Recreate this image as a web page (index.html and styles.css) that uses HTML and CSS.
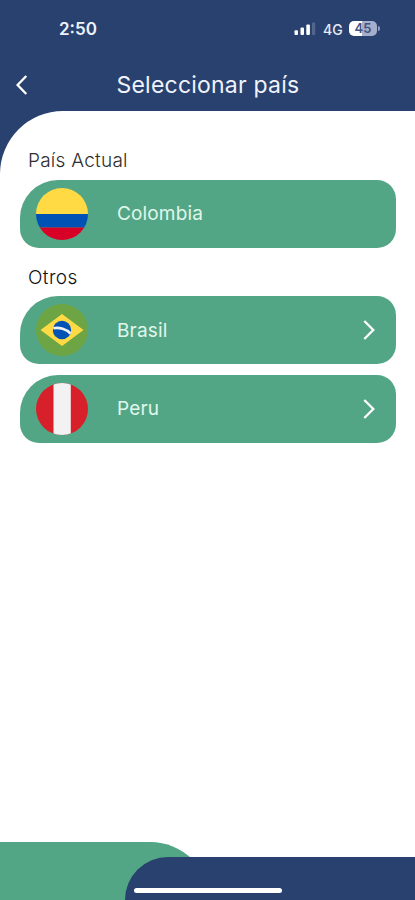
FILE: index.html
```html
<!DOCTYPE html>
<html lang="es">
<head>
<meta charset="utf-8">
<meta name="viewport" content="width=device-width, initial-scale=1">
<title>Seleccionar país</title>
<link rel="stylesheet" href="styles.css">
</head>
<body>
<div class="app">
  <div class="status">
    <span class="time">2:50</span>
    <svg class="signal" width="22" height="14" viewBox="0 0 22 14" fill="#fff">
      <rect x="0.5" y="8.300" width="3.500" height="4.600" rx="1"/>
      <rect x="6.500" y="5.600" width="3.500" height="7.300" rx="1"/>
      <rect x="12.300" y="2.600" width="3.600" height="10.300" rx="1"/>
      <rect x="18" y="0.600" width="3.200" height="12.300" rx="1" opacity=".2"/>
    </svg>
    <span class="network">4G</span>
    <span class="battery"><span class="level">45</span></span>
  </div>
  <header class="header">
    <svg class="back" width="14" height="20" viewBox="0 0 14 20" fill="none" stroke="#fff" stroke-width="2.300"><path d="M12.300 1L3.600 10l8.700 9"/></svg>
    <h1 class="title">Seleccionar país</h1>
  </header>
  <main class="sheet">
    <h2 class="label">País Actual</h2>
    <div class="card">
      <svg class="flag" viewBox="0 0 52 52">
        <clipPath id="disc"><circle cx="26" cy="26" r="26"/></clipPath>
        <g clip-path="url(#disc)">
          <path fill="#ffda44" d="M0 0h52v26H0z"/>
          <path fill="#0052b4" d="M0 26h52v13.500H0z"/>
          <path fill="#d80027" d="M0 39.500h52V52H0z"/>
        </g>
      </svg>
      <span class="name">Colombia</span>
    </div>
    <h2 class="label others">Otros</h2>
    <div class="card">
      <svg class="flag" viewBox="0 0 52 52">
        <circle cx="26" cy="26" r="26" fill="#6da544"/>
        <path fill="#ffda44" d="M26 10l21.500 16L26 42 4.500 26z"/>
        <circle cx="26" cy="26" r="9.200" fill="#0052b4"/>
        <path fill="none" stroke="#f0f0f0" stroke-width="2.700" d="M17.300 24.200c6-1.200 13.200.8 17.300 5.400"/>
      </svg>
      <span class="name">Brasil</span>
      <svg class="go" width="14" height="20" viewBox="0 0 14 20" fill="none" stroke="#fff" stroke-width="2.300"><path d="M2.300 1l9 9-9 9"/></svg>
    </div>
    <div class="card">
      <svg class="flag" viewBox="0 0 52 52">
        <g clip-path="url(#disc)">
          <path fill="#d8202a" d="M0 0h52v52H0z"/>
          <path fill="#f3f2f3" d="M17.500 0h17.300v52H17.500z"/>
        </g>
      </svg>
      <span class="name">Peru</span>
      <svg class="go" width="14" height="20" viewBox="0 0 14 20" fill="none" stroke="#fff" stroke-width="2.300"><path d="M2.300 1l9 9-9 9"/></svg>
    </div>
  </main>
  <footer class="footer">
    <div class="wave-green"></div>
    <div class="wave-navy"><div class="home"></div></div>
  </footer>
</div>
</body>
</html>
```
FILE: styles.css
```css
* { box-sizing: border-box; }
body {
  margin: 0;
  font-family: Inter, "Liberation Sans", sans-serif;
  background: #fff;
}
h1, h2 { margin: 0; font-weight: 400; }
svg { display: block; flex: none; }
.app {
  display: flex;
  flex-direction: column;
  height: 900px;
  overflow: hidden;
  background: linear-gradient(#29416f 200px, #fff 200px);
}
.status {
  display: flex;
  align-items: center;
  height: 58px;
  padding-left: 59px;
  color: #fff;
  flex: none;
}
.time { width: 235px; font-size: 17px; font-weight: 600; color: #eef2fc; }
.network { margin-left: 7px; width: 26px; font-size: 14px; font-weight: 500; color: #e6ebf7; }
.battery {
  display: flex;
  align-items: center;
  margin-top: -1px;
}
.battery::after {
  content: "";
  width: 2px;
  height: 5px;
  margin-left: 1px;
  border-radius: 0 2px 2px 0;
  background: #929fc0;
}
.level {
  width: 28px;
  height: 15px;
  border-radius: 5px;
  background: linear-gradient(90deg, #fff 45%, #a5aeca 45%);
  color: #40527f;
  font-size: 13px;
  font-weight: 600;
  line-height: 15px;
  text-align: center;
}
.header {
  display: flex;
  align-items: center;
  height: 53px;
  padding-left: 14px;
  flex: none;
}
.title {
  margin-left: 88.500px;
  color: #f0f3fb;
  font-size: 23px;
  line-height: 30px;
  letter-spacing: 0.22px;
  white-space: nowrap;
}
.sheet {
  flex: 1;
  padding: 37px 19px 0 20px;
  border-top-left-radius: 63px;
  background: #fff;
}
.label {
  height: 31.500px;
  padding-left: 8px;
  color: #2e2e30;
  font-size: 19px;
  font-weight: 350;
  line-height: 26px;
  letter-spacing: 0.25px;
}
.others { margin-top: 17px; color: #101011; letter-spacing: 0.4px; }
.card {
  display: flex;
  align-items: center;
  height: 68px;
  padding: 0 20px 0 16px;
  border-radius: 38px 19px 19px 19px;
  background: #53a685;
}
.card + .card { margin-top: 10.500px; }
.flag { width: 52px; height: 52px; }
.name {
  flex: 1;
  margin-left: 29px;
  padding-top: 1px;
  color: #e0f6eb;
  font-size: 19px;
  line-height: 24px;
  letter-spacing: 0.15px;
}
.footer {
  display: grid;
  grid-template-columns: 125px 86px 1fr;
  height: 58.500px;
  flex: none;
  background: #fff;
}
.wave-green {
  grid-area: 1 / 1 / 2 / 3;
  height: 80px;
  border-top-right-radius: 61px;
  background: #53a685;
}
.wave-navy {
  grid-area: 1 / 2 / 2 / 4;
  height: 65px;
  margin-top: 15px;
  padding: 31px 0 0 9px;
  border-top-left-radius: 43px;
  background: #29416f;
}
.home { width: 148px; height: 5px; border-radius: 3px; background: #fff; }
```
